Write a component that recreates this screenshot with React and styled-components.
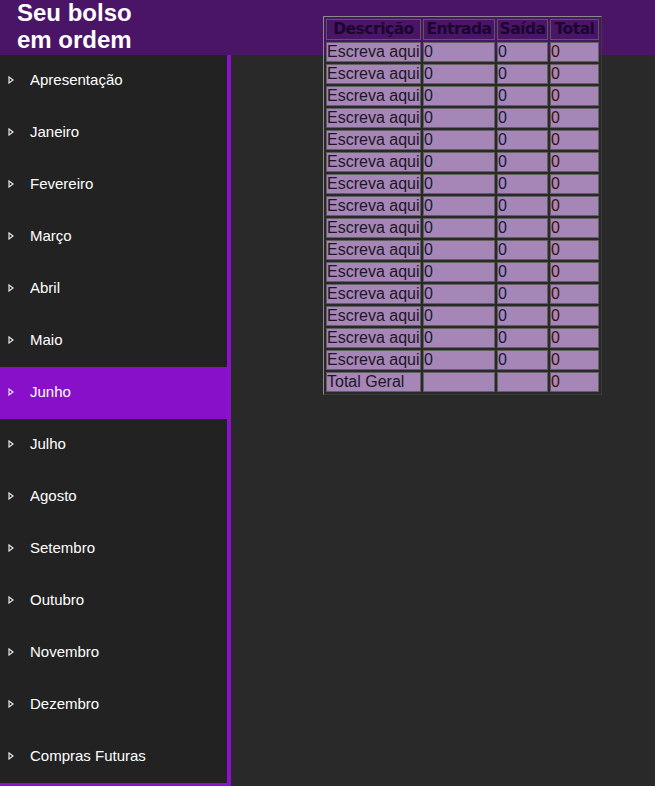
import React from "react";
import styled, { createGlobalStyle } from "styled-components";

const Global = createGlobalStyle`
  html, body { margin: 0; padding: 0; background: #292929; }
  body { font-family: "Liberation Sans", Arial, sans-serif; overflow: hidden; }
`;

const Page = styled.div`
  position: relative;
  width: 655px;
  height: 786px;
  display: flex;
  flex-direction: column;
  background: #292929;
`;

const Header = styled.header`
  height: 55px;
  flex: none;
  background: #4a1467;
  padding-left: 17px;
  box-sizing: border-box;
  overflow: hidden;
`;

const Title = styled.h1`
  margin: -1px 0 0;
  font-family: "Liberation Sans", Arial, sans-serif;
  font-weight: bold;
  font-size: 24px;
  line-height: 27px;
  color: #ffffff;
`;

const Body = styled.div`
  flex: 1;
  display: flex;
  min-height: 0;
`;

const Sidebar = styled.nav`
  width: 227px;
  flex: none;
  background: #222222;
  border-right: 4px solid #8a12cf;
  border-bottom: 3px solid #8a12cf;
  display: flex;
  flex-direction: column;
`;

const Item = styled.div`
  height: 52px;
  flex: none;
  box-sizing: border-box;
  padding: 0 0 3px 8px;
  display: flex;
  align-items: center;
  gap: 16px;
  font-size: 15px;
  color: #ffffff;
  background: ${(p) => (p.$active ? "#8810c8" : "transparent")};
`;

const Main = styled.main`
  flex: 1;
`;

const TableWrap = styled.div`
  position: absolute;
  left: 323px;
  top: 16px;
`;

const Table = styled.table`
  table-layout: fixed;
  width: 279px;
  box-sizing: border-box;
  border-collapse: separate;
  border-spacing: 2px;
  border-style: solid;
  border-width: 1px;
  border-color: #8a8a8a #3a3a3a #3a3a3a #8a8a8a;
`;

const Th = styled.th`
  padding: 1px 0;
  border: 1px solid #5a5a5a;
  font-family: "DejaVu Sans", Verdana, sans-serif;
  font-weight: bold;
  font-size: 15.5px;
  line-height: 17px;
  color: #1a0630;
  white-space: nowrap;
  overflow: hidden;
  width: ${(p) => p.$w}px;
  text-align: center;
  letter-spacing: -0.5px;
`;

const Td = styled.td`
  padding: 1px 0;
  border: 1px solid #5f5f5f;
  background: #a586b6;
  font-family: "Liberation Sans", Arial, sans-serif;
  font-size: 16px;
  line-height: 16px;
  height: 16px;
  color: ${(p) => p.$c || "#1e1626"};
  white-space: nowrap;
  overflow: hidden;
  text-align: left;
`;

const Arrow = () => (
  <svg width="6" height="8" viewBox="0 0 6 8">
    <polygon points="1,1 5,4 1,7" fill="none" stroke="#e8e2f0" strokeWidth="1.2" />
  </svg>
);

const months = [
  "Apresentação",
  "Janeiro",
  "Fevereiro",
  "Março",
  "Abril",
  "Maio",
  "Junho",
  "Julho",
  "Agosto",
  "Setembro",
  "Outubro",
  "Novembro",
  "Dezembro",
  "Compras Futuras",
];

export default function App() {
  const rows = Array.from({ length: 15 });
  return (
    <Page>
      <Global />
      <Header>
        <Title>
          Seu bolso
          <br />
          em ordem
        </Title>
      </Header>
      <Body>
        <Sidebar>
          {months.map((m) => (
            <Item key={m} $active={m === "Junho"}>
              <Arrow />
              <span>{m}</span>
            </Item>
          ))}
        </Sidebar>
        <Main />
      </Body>
      <TableWrap>
        <Table>
          <thead>
            <tr>
              <Th $w={93}>Descrição</Th>
              <Th $w={70}>Entrada</Th>
              <Th $w={49}>Saída</Th>
              <Th $w={47}>Total</Th>
            </tr>
          </thead>
          <tbody>
            {rows.map((_, i) => (
              <tr key={i}>
                <Td>Escreva aqui</Td>
                <Td $c="#141a3a">0</Td>
                <Td $c="#141a3a">0</Td>
                <Td $c="#3a1208">0</Td>
              </tr>
            ))}
            <tr>
              <Td>Total Geral</Td>
              <Td />
              <Td />
              <Td $c="#3a1208">0</Td>
            </tr>
          </tbody>
        </Table>
      </TableWrap>
    </Page>
  );
}
